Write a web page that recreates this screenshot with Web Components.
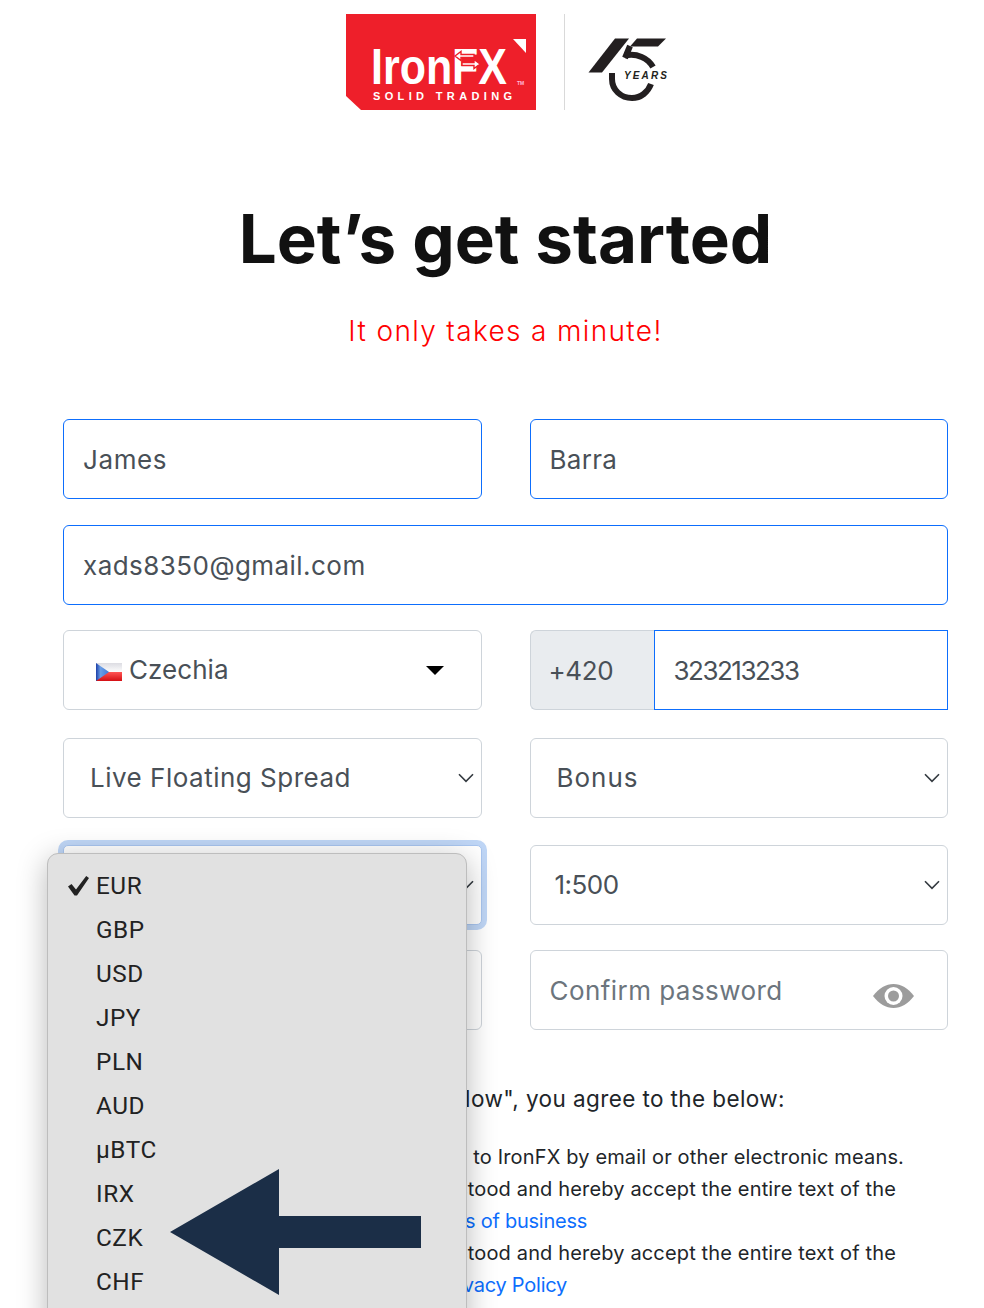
<!DOCTYPE html>
<html lang="en"><head><meta charset="utf-8"><title>IronFX</title>
<style>
html,body{margin:0;padding:0;background:#fff}
body{font-family:Inter,"Open Sans",sans-serif;width:984px;height:1308px;overflow:hidden}
</style></head><body>
<app-shell>
  <brand-header></brand-header>
  <hero-title heading="Let’s get started" sub="It only takes a minute!"></hero-title>
  <form-row style="margin-top:0">
    <text-field value="James" active style="letter-spacing:.6px"></text-field>
    <text-field value="Barra" active style="letter-spacing:.3px"></text-field>
  </form-row>
  <form-row style="margin-top:26px" single>
    <text-field value="xads8350@gmail.com" active style="letter-spacing:.45px"></text-field>
  </form-row>
  <form-row style="margin-top:25px">
    <country-field value="Czechia" style="letter-spacing:.05px"></country-field>
    <phone-field prefix="+420" value="323213233"></phone-field>
  </form-row>
  <form-row style="margin-top:28px">
    <select-field value="Live Floating Spread" inset="26" style="letter-spacing:.5px"></select-field>
    <select-field value="Bonus" inset="26" style="letter-spacing:1px"></select-field>
  </form-row>
  <form-row style="margin-top:27px">
    <select-field value="" inset="26" focused></select-field>
    <select-field value="1:500" inset="24" style="letter-spacing:-.5px"></select-field>
  </form-row>
  <form-row style="margin-top:25px">
    <text-field placeholder=" "></text-field>
    <password-field placeholder="Confirm password" style="letter-spacing:.45px"></password-field>
  </form-row>
  <agree-block>
    <agree-line size="lead" end="785">By clicking "Open Account Now", you agree to the below:</agree-line>
    <agree-line end="904">I consent to receive communication to IronFX by email or other electronic means.</agree-line>
    <agree-line end="896">I have read, understood and hereby accept the entire text of the</agree-line>
    <agree-line end="587"><a>Terms of business</a></agree-line>
    <agree-line end="896">I have read, understood and hereby accept the entire text of the</agree-line>
    <agree-line end="567"><a>Privacy Policy</a></agree-line>
  </agree-block>
  <option-menu></option-menu>
  <arrow-callout></arrow-callout>
</app-shell>
<script>
function def(name, css, html){
  customElements.define(name, class extends HTMLElement{
    constructor(){super();this.attachShadow({mode:'open'});}
    connectedCallback(){
      const h = typeof html==='function'?html(this):html;
      this.shadowRoot.innerHTML='<style>'+css+'</style>'+h;
    }
  });
}
const FIELD=`:host{display:block;height:80px;box-sizing:border-box;font-size:26px;color:#495057}
.box{height:100%;box-sizing:border-box;border:1px solid #ced4da;border-radius:6px;display:flex;align-items:center;background:#fff;position:relative;white-space:nowrap}`;
const CHEV=`<svg width="16" height="10" viewBox="0 0 16 10" style="flex:none"><path d="M1 1.200L8 8.400L15 1.200" fill="none" stroke="#343a40" stroke-width="1.600"/></svg>`;

def('app-shell',`:host{display:block;position:relative;width:984px;height:1308px;overflow:hidden;box-sizing:border-box;padding:14px 36px 0 63px}`,`<slot></slot>`);

def('brand-header',`:host{display:flex;justify-content:center;height:96px}
svg{display:block;margin-left:2px}
text{font-family:"Liberation Sans",Arial,sans-serif}`,
`<svg width="322" height="96" viewBox="346 14 322 96">
  <path d="M346 14H536V110H361L346 96Z" fill="#ee1f2a"/>
  <path d="M513 39H526V53Z" fill="#fff"/>
  <text x="371" y="84" font-size="50" font-weight="700" fill="#fff" textLength="136" lengthAdjust="spacingAndGlyphs">IronFX</text>
  <g stroke="#ee1f2a" stroke-width="1.400" fill="#fff">
    <path d="M455 56L461 51.500V54.500H474V57.500H461V60.500Z"/>
    <path d="M480 64L474 59.500V62.500H462V65.500H474V68.500Z"/>
  </g>
  <text x="517" y="85" font-size="5" font-weight="700" fill="#fbd">TM</text>
  <text x="373" y="100" font-size="11" font-weight="700" fill="#fff" textLength="139" lengthAdjust="spacing">SOLID TRADING</text>
  <rect x="564" y="14" width="1" height="96" fill="#d9d9d9"/>
  <path d="M588.500 72.500L615 38.500H629L602 72.500Z" fill="#231f20"/>
  <path d="M637 38.500H666L658 46.500H630Z" fill="#231f20"/>
  <path d="M630 46L625 58" stroke="#231f20" stroke-width="6" fill="none"/>
  <path d="M625 55.500C637 53 648 58 653 67" stroke="#231f20" stroke-width="6" fill="none"/>
  <path d="M612 73V79C612 90 621 98 632 98C641 98 648 92 651 84" stroke="#231f20" stroke-width="6" fill="none"/>
  <text x="624" y="79" font-size="10" font-weight="700" font-style="italic" fill="#231f20" textLength="43" lengthAdjust="spacing">YEARS</text>
</svg>`);

def('hero-title',`:host{display:block;text-align:center;height:309px;box-sizing:border-box;padding-top:1px}
h1{margin:0;padding-top:88px;font-size:67.300px;line-height:80px;font-weight:700;color:#111;letter-spacing:0}
p{margin:0;padding-top:32px;font-size:28px;line-height:40px;color:#f00;font-weight:300;letter-spacing:1.350px}`,
t=>`<h1>${t.getAttribute('heading')}</h1><p>${t.getAttribute('sub')}</p>`);

def('form-row',`:host{display:grid;grid-template-columns:1fr 1fr;column-gap:48px}
:host([single]){grid-template-columns:1fr}`,`<slot></slot>`);

def('text-field',FIELD+`.box{padding-left:19px}.box.active{border-color:#0d6efd}`,
t=>`<div class="box ${t.hasAttribute('active')?'active':''}"><span>${t.getAttribute('value')||''}</span></div>`);

def('country-field',FIELD+`.box{padding-left:32px;padding-right:37px}
.flag{flex:none;margin-right:7px;display:block;margin-top:3px}
.name{flex:1;margin-top:-1px}
.caret{width:0;height:0;border-left:9px solid transparent;border-right:9px solid transparent;border-top:9px solid #000}`,
t=>`<div class="box"><svg class="flag" width="26" height="18" viewBox="0 0 26 18">
<defs><linearGradient id="w" x1="0" y1="0" x2="0" y2="1"><stop offset="0" stop-color="#dcdce2"/><stop offset="1" stop-color="#fdfdfd"/></linearGradient>
<linearGradient id="r" x1="0" y1="0" x2="0" y2="1"><stop offset="0" stop-color="#f55"/><stop offset="1" stop-color="#d40f14"/></linearGradient>
<linearGradient id="b" x1="0" y1="0" x2="1" y2="0"><stop offset="0" stop-color="#1c3fa8"/><stop offset=".35" stop-color="#6a9ee6"/><stop offset="1" stop-color="#3f78d8"/></linearGradient></defs>
<rect width="26" height="9" fill="url(#w)"/><rect y="9" width="26" height="9" fill="url(#r)"/><path d="M0 0L13 9L0 18Z" fill="url(#b)"/></svg>
<span class="name">${t.getAttribute('value')}</span><span class="caret"></span></div>`);

def('phone-field',FIELD+`.wrap{display:flex;height:100%}
.pre{flex:none;width:124px;box-sizing:border-box;background:#e9ecef;border:1px solid #ced4da;border-right:0;border-radius:6px 0 0 6px;display:flex;align-items:center;padding-left:18px;letter-spacing:-.4px}
.num{flex:1;border:1px solid #0d6efd;display:flex;align-items:center;padding-left:19px;letter-spacing:-1.500px}`,
t=>`<div class="wrap"><div class="pre">${t.getAttribute('prefix')}</div><div class="num">${t.getAttribute('value')}</div></div>`);

def('select-field',FIELD+`.box{justify-content:space-between;padding-right:7px}
.box span{margin-top:-1px}
.box.focused{box-shadow:0 0 0 5px #bfd6f6;border-color:#a9c6f0;border-radius:5px}`,
t=>`<div class="box ${t.hasAttribute('focused')?'focused':''}" style="padding-left:${t.getAttribute('inset')}px"><span>${t.getAttribute('value')}</span>${CHEV}</div>`);

def('password-field',FIELD+`.box{padding-left:19px;padding-right:33px;justify-content:space-between;color:#6c757d}
svg{margin-top:12px;flex:none}`,
t=>`<div class="box"><span>${t.getAttribute('placeholder')}</span>
<svg width="41" height="24" viewBox="0 0 41 24"><path d="M0 12C6 4 13 0 20.500 0S35 4 41 12C35 20 28 24 20.500 24S6 20 0 12Z" fill="#9c9c9c"/><circle cx="20.500" cy="12" r="9" fill="#fff"/><circle cx="20.500" cy="12" r="5.500" fill="#9c9c9c"/></svg></div>`);

def('agree-block',`:host{display:block;padding-top:52px;color:#212529}`,`<slot></slot>`);
def('agree-line',`:host{display:block;height:32px;line-height:32px;font-size:20px;letter-spacing:.15px;white-space:nowrap;text-align:right;color:#212529}
:host([size=lead]){font-size:22.500px;letter-spacing:.4px;height:59px;line-height:34px}
::slotted(a){color:#0d6efd;letter-spacing:-.25px}`,
t=>`<div style="padding-right:${948-(+t.getAttribute('end'))}px"><slot></slot></div>`);

def('option-menu',`:host{position:absolute;left:47px;top:853px;width:420px;height:520px;box-sizing:border-box;background:#e1e1e1;border:1px solid #bdbdbd;border-radius:11px;box-shadow:0 6px 30px rgba(0,0,0,.28);padding-top:9px;font-family:Roboto,Inter,sans-serif;font-size:24.300px;letter-spacing:.55px;color:#222}
.o{height:44px;display:flex;align-items:center;padding-left:48px;position:relative}
svg{position:absolute;left:20px;top:13px}`,
()=>['EUR','GBP','USD','JPY','PLN','AUD','µBTC','IRX','CZK','CHF'].map((c,i)=>`<div class="o">${i==0?'<svg width="22" height="20" viewBox="0 0 22 20"><path d="M0 10.500L3.500 8L8 13.500L18.200 0L21 2L9 19.500H6.500Z" fill="#222"/></svg>':''}${c}</div>`).join(''));

def('arrow-callout',`:host{position:absolute;left:170px;top:1169px;width:252px;height:126px;display:block}`,
`<svg width="252" height="126" viewBox="170 1169 252 126" style="display:block"><path d="M170 1232L279 1169V1216H421V1248H279V1295Z" fill="#1b2e47"/></svg>`);
</script>
</body></html>
